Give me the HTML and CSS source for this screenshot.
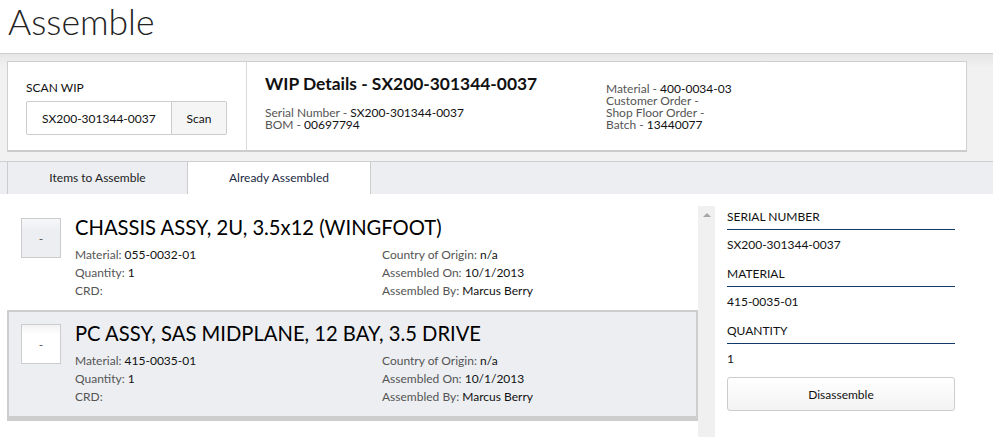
FILE: index.html
```html
<!DOCTYPE html>
<html>
<head>
<meta charset="utf-8">
<title>Assemble</title>
<link rel="stylesheet" href="styles.css">
</head>
<body>
<header class="page-head"><h1 class="page-title">Assemble</h1></header>
<section class="wip-band">
  <div class="wip-card">
    <div class="scan">
      <div class="scan-label">SCAN WIP</div>
      <div class="scan-group">
        <input class="scan-input" type="text" value="SX200-301344-0037">
        <button class="scan-btn">Scan</button>
      </div>
    </div>
    <div class="details">
      <div class="details-main">
        <h2 class="details-title">WIP Details - SX200-301344-0037</h2>
        <div class="kv">Serial Number - <span class="v">SX200-301344-0037</span></div>
        <div class="kv">BOM - <span class="v">00697794</span></div>
      </div>
      <div class="details-side">
        <div class="kv">Material - <span class="v">400-0034-03</span></div>
        <div class="kv">Customer Order -</div>
        <div class="kv">Shop Floor Order -</div>
        <div class="kv">Batch - <span class="v">13440077</span></div>
      </div>
    </div>
  </div>
</section>
<nav class="tabs">
  <div class="tab">Items to Assemble</div>
  <div class="tab tab-active">Already Assembled</div>
</nav>
<main class="content">
  <div class="items">
    <div class="item">
      <button class="toggle">-</button>
      <div class="item-body">
        <div class="item-title">CHASSIS ASSY, 2U, 3.5x12 (WINGFOOT)</div>
        <div class="item-grid">
          <div>Material: <span class="v">055-0032-01</span></div>
          <div>Country of Origin: <span class="v">n/a</span></div>
          <div>Quantity: <span class="v">1</span></div>
          <div>Assembled On: <span class="v">10/1/2013</span></div>
          <div>CRD:</div>
          <div>Assembled By: <span class="v">Marcus Berry</span></div>
        </div>
      </div>
    </div>
    <div class="item item-selected">
      <button class="toggle toggle-light">-</button>
      <div class="item-body">
        <div class="item-title">PC ASSY, SAS MIDPLANE, 12 BAY, 3.5 DRIVE</div>
        <div class="item-grid">
          <div>Material: <span class="v">415-0035-01</span></div>
          <div>Country of Origin: <span class="v">n/a</span></div>
          <div>Quantity: <span class="v">1</span></div>
          <div>Assembled On: <span class="v">10/1/2013</span></div>
          <div>CRD:</div>
          <div>Assembled By: <span class="v">Marcus Berry</span></div>
        </div>
      </div>
    </div>
  </div>
  <div class="scrollbar"><span class="scroll-up"></span></div>
  <aside class="info">
    <div class="info-label">SERIAL NUMBER</div>
    <div class="info-value">SX200-301344-0037</div>
    <div class="info-label">MATERIAL</div>
    <div class="info-value">415-0035-01</div>
    <div class="info-label">QUANTITY</div>
    <div class="info-value info-last">1</div>
    <button class="action-btn">Disassemble</button>
  </aside>
</main>
</body>
</html>
```
FILE: styles.css
```css
* { box-sizing: border-box; }
html, body { margin: 0; padding: 0; background: #fff; }
body {
  font-family: "Lato", "Liberation Sans", sans-serif;
  color: #111;
  width: 993px;
  height: 437px;
  overflow: hidden;
}
button, input { font-family: inherit; }

.page-head { height: 53px; padding-left: 8px; }
.page-title {
  margin: 0;
  font-size: 35.5px;
  font-weight: 300;
  line-height: 43px;
  color: #222;
}

.wip-band {
  border-top: 1px solid #cfcfcf;
  border-bottom: 1px solid #cfcfcf;
  background: linear-gradient(#e6e6e6, #f1f1f1 14px, #f1f1f1);
  padding: 7px 26px 9px 7px;
}
.wip-card {
  display: flex;
  width: 960px;
  height: 91px;
  background: #fff;
  border: 1px solid #cfcfcf;
  border-bottom: 2px solid #cccccc;
}
.scan {
  width: 239px;
  flex: none;
  border-right: 1px solid #d9d9d9;
  padding: 17px 0 0 18px;
}
.scan-label { font-size: 12px; line-height: 18px; color: #111; }
.scan-group { display: flex; margin-top: 4px; }
.scan-input {
  width: 146px;
  height: 34px;
  margin: 0;
  border: 1px solid #cccccc;
  border-radius: 2px 0 0 2px;
  padding: 0 0 0 15px;
  font-size: 12px;
  color: #111;
  background: #fff;
  outline: none;
}
.scan-btn {
  width: 55px;
  height: 34px;
  margin: 0;
  border: 1px solid #cccccc;
  border-left: 0;
  border-radius: 0 2px 2px 0;
  background: #f5f5f5;
  font-size: 12px;
  color: #111;
  padding: 0;
}

.details {
  flex: 1;
  display: flex;
  align-items: flex-end;
  padding: 11px 0 19px 18px;
}
.details-main { width: 341px; flex: none; }
.details-title {
  margin: 0 0 12px;
  font-size: 17.4px;
  font-weight: 700;
  line-height: 22px;
  color: #111;
}
.kv { font-size: 12px; line-height: 12px; color: #555; }
.v { color: #111; }

.tabs {
  display: flex;
  height: 32px;
  background: #eceef2;
  padding-left: 7px;
}
.tab {
  width: 180px;
  border-left: 1px solid #cccccc;
  font-size: 12px;
  line-height: 32px;
  text-align: center;
  color: #222;
}
.tab-active {
  width: 184px;
  background: #fff;
  border-right: 1px solid #cccccc;
  color: #1c2a44;
}

.content { display: flex; height: 243px; }
.items { width: 691px; flex: none; margin-left: 7px; padding-top: 10px; }
.item {
  display: flex;
  border: 2px solid transparent;
  border-bottom-width: 0;
  padding: 12px 12px 10px 12px;
}
.item-selected {
  background: #eceef2;
  border-color: #cdcdcd;
  border-bottom-width: 5px;
}
.toggle {
  width: 40px;
  height: 40px;
  flex: none;
  margin: 0 14px 0 0;
  padding: 0;
  border: 1px solid #cccccc;
  background: linear-gradient(#f6f7f9, #eceef2 12px);
  font-size: 12px;
  color: #555;
}
.toggle-light { background: linear-gradient(#f3f3f3, #fff 10px); }
.item-body { flex: 1; margin-top: -3px; }
.item-title {
  font-size: 20.2px;
  line-height: 24px;
  margin-bottom: 7px;
  color: #000;
}
.item-grid {
  display: grid;
  grid-template-columns: 307px 1fr;
  font-size: 12px;
  line-height: 18px;
  color: #555;
}

.scrollbar {
  width: 17px;
  flex: none;
  margin-top: 12px;
  background: #f0f0f0;
  display: flex;
  justify-content: center;
  padding-top: 7px;
}
.scroll-up {
  width: 0;
  height: 0;
  border-left: 4px solid transparent;
  border-right: 4px solid transparent;
  border-bottom: 4px solid #a6a6a6;
}

.info { width: 228px; flex: none; margin-left: 12px; padding-top: 14px; }
.info-label {
  font-size: 12px;
  line-height: 18px;
  padding-bottom: 3px;
  border-bottom: 1px solid #123a68;
  color: #111;
}
.info-value { font-size: 12px; line-height: 18px; margin: 6px 0 11px; color: #111; }
.info-last { margin-bottom: 9px; }
.action-btn {
  width: 100%;
  height: 34px;
  margin: 0;
  border: 1px solid #cccccc;
  border-radius: 3px;
  background: linear-gradient(#ffffff, #f3f3f3);
  font-size: 12px;
  color: #111;
}
```
